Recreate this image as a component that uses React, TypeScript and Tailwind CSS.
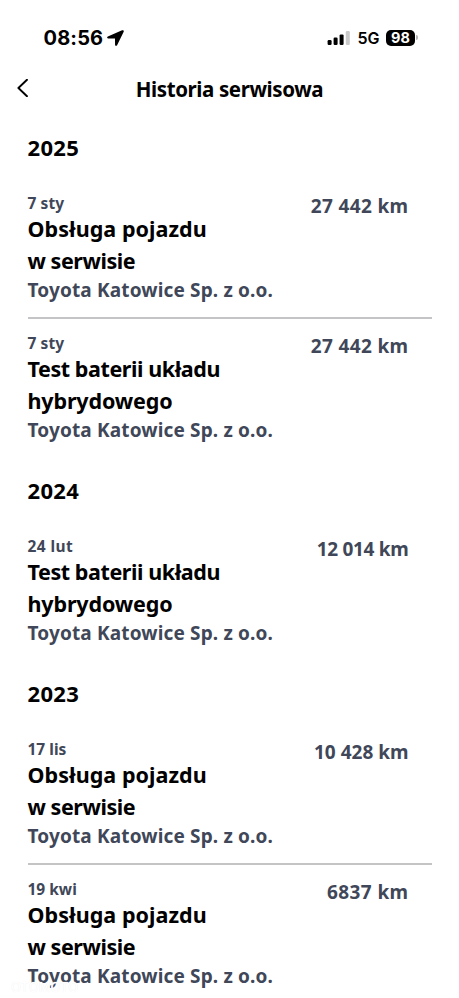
type Line = { text: string; tracking: string };
type Service = { date: Line; title: Line[]; mileage: Line };
type Year = { year: string; services: Service[] };

const inspection: Line[] = [
  { text: "Obsługa pojazdu", tracking: "tracking-[0.05px]" },
  { text: "w serwisie", tracking: "tracking-[-0.45px]" },
];
const batteryTest: Line[] = [
  { text: "Test baterii układu", tracking: "tracking-[-0.42px]" },
  { text: "hybrydowego", tracking: "tracking-[-0.15px]" },
];

const history: Year[] = [
  {
    year: "2025",
    services: [
      {
        date: { text: "7 sty", tracking: "tracking-[0.1px]" },
        title: inspection,
        mileage: { text: "27 442 km", tracking: "tracking-[0.35px]" },
      },
      {
        date: { text: "7 sty", tracking: "tracking-[0.1px]" },
        title: batteryTest,
        mileage: { text: "27 442 km", tracking: "tracking-[0.35px]" },
      },
    ],
  },
  {
    year: "2024",
    services: [
      {
        date: { text: "24 lut", tracking: "tracking-[0.4px]" },
        title: batteryTest,
        mileage: { text: "12 014 km", tracking: "tracking-[-0.3px]" },
      },
    ],
  },
  {
    year: "2023",
    services: [
      {
        date: { text: "17 lis", tracking: "tracking-normal" },
        title: inspection,
        mileage: { text: "10 428 km", tracking: "tracking-normal" },
      },
      {
        date: { text: "19 kwi", tracking: "tracking-normal" },
        title: inspection,
        mileage: { text: "6837 km", tracking: "tracking-[0.4px]" },
      },
    ],
  },
];

function StatusBar() {
  return (
    <div className="flex h-[62px] items-center justify-between pt-[13px] pl-[43.5px] pr-[41px] font-['Inter',sans-serif]">
      <div className="flex items-center">
        <span className="text-[20px] leading-6 font-bold tracking-[0.15px]">08:56</span>
        <svg className="ml-[3.5px] h-4 w-[17px]" viewBox="0 0 16 16" preserveAspectRatio="none" fill="currentColor">
          <path d="M14.200.3.8 6.400C-.3 7 0 8.400 1.100 8.400L7.500 8.500 7.600 14.900C7.700 16 9 16.200 9.500 15.200L15.700 1.800C16.100.7 15.300-.1 14.200.3Z" />
        </svg>
      </div>
      <div className="flex items-center">
        <svg className="h-[14px] w-[23px]" viewBox="0 0 23 14" fill="currentColor">
          <rect x="0.600" y="9" width="4" height="5" rx="1.200" />
          <rect x="6.600" y="6.500" width="4" height="7.500" rx="1.200" />
          <rect x="12.600" y="3.400" width="4" height="10.600" rx="1.200" />
          <rect x="18.800" y="0" width="4" height="14" rx="1.200" fill="#c9c9c9" />
        </svg>
        <span className="ml-[7px] text-[16px] leading-5 font-semibold">5G</span>
        <span className="ml-[6.500px] flex h-4 w-[29px] items-center justify-center rounded-[5px] bg-black text-[14.5px] leading-4 font-bold text-white">
          98
        </span>
        <span className="ml-px h-[5px] w-[2px] rounded-r-full bg-[#b5b5b5]" />
      </div>
    </div>
  );
}

function ServiceRow({ service, divided }: { service: Service; divided: boolean }) {
  const { date, title, mileage } = service;
  return (
    <li className={`relative flex h-[140px] justify-between pt-[15px] ${divided ? "after:absolute after:inset-x-0 after:-bottom-px after:h-[2px] after:bg-[#c4c4c6]" : ""}`}>
      <div className="whitespace-nowrap">
        <p className={`h-5 text-[15.5px] leading-5 font-bold text-[#404758] ${date.tracking}`}>{date.text}</p>
        <h3 className="text-[21.5px] leading-8 font-bold">
          {title.map((line) => (
            <span key={line.text} className={`block ${line.tracking}`}>
              {line.text}
            </span>
          ))}
        </h3>
        <p className="text-[19px] leading-[26px] font-bold tracking-[0.15px] text-[#404758]">Toyota Katowice Sp. z o.o.</p>
      </div>
      <p className={`mr-[23.5px] text-[19px] leading-[26px] font-bold whitespace-nowrap text-[#404758] ${mileage.tracking}`}>
        {mileage.text}
      </p>
    </li>
  );
}

export default function App() {
  return (
    <div className="relative h-[998px] w-[459px] overflow-hidden bg-white font-['Noto_Sans',sans-serif] text-black">
      <StatusBar />
      <header className="grid h-[53px] grid-cols-[48px_1fr_48px] items-center">
        <svg className="mb-[2px] ml-[17px] h-[18px] w-[11px]" viewBox="0 0 11 18" fill="none" stroke="currentColor" strokeWidth="1.900">
          <path d="M10 .8 1.400 9 10 17.200" strokeLinecap="round" strokeLinejoin="round" />
        </svg>
        <h1 className="text-center text-[20.5px] leading-7 font-bold tracking-[-0.4px]">Historia serwisowa</h1>
      </header>
      <main className="pr-[27px] pl-[27.5px]">
        {history.map(({ year, services }) => (
          <section key={year}>
            <h2 className="h-[63px] pt-4 text-[22px] leading-8 font-bold tracking-[0.3px]">{year}</h2>
            <ul>
              {services.map((service, i) => (
                <ServiceRow key={i} service={service} divided={i < services.length - 1} />
              ))}
            </ul>
          </section>
        ))}
      </main>
      <span className="absolute top-[979px] left-[11px] font-['Inter',sans-serif] text-[13px] leading-4 font-medium text-white [text-shadow:0_0_1px_#ececec]">
        OTOMOTO
      </span>
    </div>
  );
}
